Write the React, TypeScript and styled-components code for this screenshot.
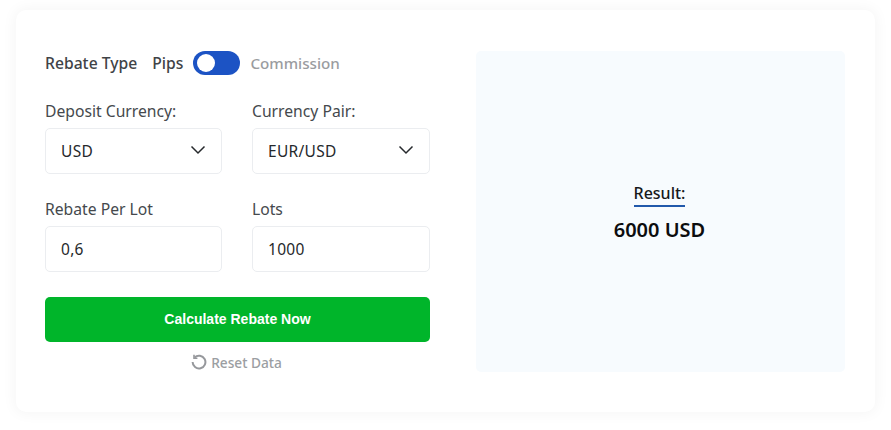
import styled, { createGlobalStyle } from "styled-components";

const GlobalStyle = createGlobalStyle`
  html, body {
    margin: 0;
    padding: 0;
    background: #fff;
    height: 100%;
    overflow: hidden;
  }
`;

const Page = styled.div`
  width: 891px;
  height: 430px;
  padding: 10px 16px 18px;
  box-sizing: border-box;
  font-family: "Noto Sans", "Open Sans", sans-serif;
`;

const Card = styled.div`
  height: 402px;
  box-sizing: border-box;
  background: #fff;
  border-radius: 10px;
  box-shadow: 0 0 14px 2px rgba(0, 0, 0, 0.04);
  padding: 41px 30px 40px 29px;
  display: grid;
  grid-template-columns: 385px 369px;
  justify-content: space-between;
`;

const Form = styled.div`
  display: flex;
  flex-direction: column;
`;

const TypeRow = styled.div`
  display: flex;
  align-items: center;
  height: 24px;
  font-size: 15.7px;
  font-weight: 500;
  color: #3f4347;
`;

const TypeTitle = styled.span`
  margin-right: 15px;
`;

const TypeOption = styled.span<{ $muted?: boolean }>`
  color: ${(p) => (p.$muted ? "#9a9ca0" : "#3f4347")};
  font-size: ${(p) => (p.$muted ? "15.2px" : "15.7px")};
`;

const Toggle = styled.span`
  width: 47px;
  height: 24px;
  margin: 0 10px 0 10px;
  border-radius: 12px;
  background: #1c53c4;
  display: flex;
  align-items: center;
  padding-left: 4px;
  box-sizing: border-box;
`;

const Knob = styled.span`
  width: 18px;
  height: 18px;
  border-radius: 50%;
  background: #fff;
`;

const Fields = styled.div`
  display: grid;
  grid-template-columns: 177px 178px;
  column-gap: 30px;
  row-gap: 24px;
  margin-top: 25px;
`;

const Field = styled.div`
  display: flex;
  flex-direction: column;
`;

const Label = styled.label`
  height: 28px;
  line-height: 22px;
  font-size: 15.7px;
  color: #45494d;
`;

const Box = styled.div`
  height: 46px;
  box-sizing: border-box;
  border: 1px solid #ebedf0;
  border-radius: 5px;
  background: #fff;
  padding: 0 15px;
  display: flex;
  align-items: center;
  justify-content: space-between;
  font-size: 15.5px;
  letter-spacing: 0.3px;
  color: #26292c;
`;

const Chevron = styled.svg`
  width: 16px;
  height: 10px;
  margin-top: -3px;
  fill: none;
  stroke: #26292c;
  stroke-width: 1.5;
`;

const Submit = styled.button`
  height: 45px;
  margin-top: 25px;
  padding: 0 0 2px;
  border: 0;
  border-radius: 5px;
  background: #00b52a;
  color: #fff;
  font-family: "Liberation Sans", Arial, sans-serif;
  font-size: 14px;
  font-weight: 700;
`;

const Reset = styled.div`
  margin-top: 10px;
  height: 20px;
  padding-right: 2px;
  display: flex;
  align-items: center;
  justify-content: center;
  gap: 4px;
  font-size: 13.7px;
  font-weight: 500;
  color: #9b9ea2;
`;

const ResetIcon = styled.svg`
  width: 16px;
  height: 16px;
  fill: none;
  stroke: #96989c;
  stroke-width: 2;
`;

const ResultPanel = styled.div`
  height: 321px;
  border-radius: 5px;
  background: #f7fbfe;
  display: flex;
  flex-direction: column;
  align-items: center;
  justify-content: center;
  padding: 2px 2px 0 0;
  box-sizing: border-box;
`;

const ResultTitle = styled.div`
  font-size: 16px;
  font-weight: 500;
  line-height: 22px;
  color: #16181a;
  border-bottom: 2px solid #2159ab;
  padding: 0 0 1px;
`;

const ResultValue = styled.div`
  margin-top: 9px;
  font-size: 20px;
  font-weight: 600;
  line-height: 28px;
  color: #0c0d0f;
`;

const fields = [
  { label: "Deposit Currency:", value: "USD", select: true },
  { label: "Currency Pair:", value: "EUR/USD", select: true },
  { label: "Rebate Per Lot", value: "0,6", select: false },
  { label: "Lots", value: "1000", select: false },
];

export default function App() {
  return (
    <>
      <GlobalStyle />
      <Page>
        <Card>
          <Form>
            <TypeRow>
              <TypeTitle>Rebate Type</TypeTitle>
              <TypeOption>Pips</TypeOption>
              <Toggle>
                <Knob />
              </Toggle>
              <TypeOption $muted>Commission</TypeOption>
            </TypeRow>
            <Fields>
              {fields.map((f) => (
                <Field key={f.label}>
                  <Label>{f.label}</Label>
                  <Box>
                    {f.value}
                    {f.select && (
                      <Chevron viewBox="0 0 16 10">
                        <path d="M1.5 1.5 8 8l6.5-6.5" />
                      </Chevron>
                    )}
                  </Box>
                </Field>
              ))}
            </Fields>
            <Submit>Calculate Rebate Now</Submit>
            <Reset>
              <ResetIcon viewBox="0 0 16 16">
                <path d="M3.6 3.4A6.4 6.4 0 1 1 1.6 8" />
                <path d="M3 0.8v3.4h3.4" strokeWidth="1.6" />
              </ResetIcon>
              Reset Data
            </Reset>
          </Form>
          <ResultPanel>
            <ResultTitle>Result:</ResultTitle>
            <ResultValue>6000 USD</ResultValue>
          </ResultPanel>
        </Card>
      </Page>
    </>
  );
}
